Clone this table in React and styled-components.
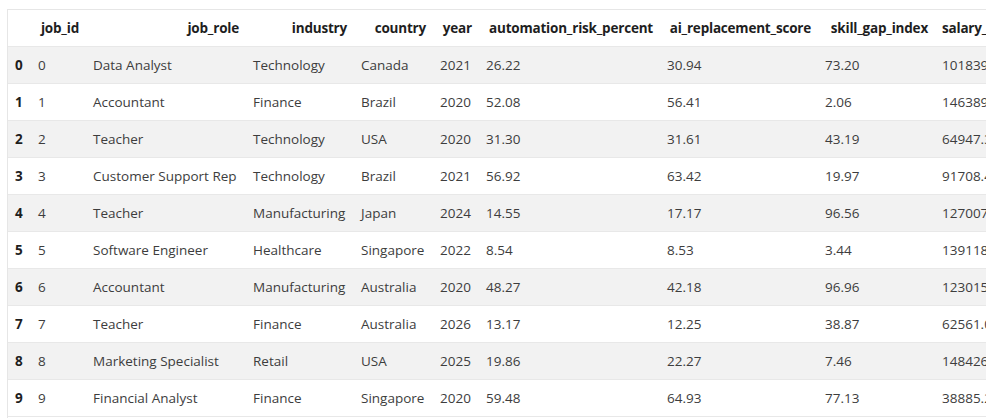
import React from "react";
import styled, { createGlobalStyle } from "styled-components";

const Global = createGlobalStyle`
  html, body { margin: 0; padding: 0; background: #ffffff; }
  body { font-family: "Open Sans", "Noto Sans", "Liberation Sans", sans-serif; }
`;

const Output = styled.div`
  margin: 9px 0 0 7px;
  width: 979px;
  height: 409px;
  overflow: hidden;
  border-top: 1px solid #e6e6e6;
  border-left: 1px solid #e6e6e6;
  box-sizing: border-box;
`;

const Table = styled.table`
  width: max-content;
  border-collapse: collapse;
  border-spacing: 0;
  font-size: 13.5px;
  color: #3d3d3d;
  white-space: nowrap;
`;

const Col = styled.col`
  width: ${(p) => (p.$w ? `${p.$w}px` : "auto")};
`;

const HeadCell = styled.th`
  height: 36px;
  padding: 1px 7px 0;
  box-sizing: border-box;
  text-align: right;
  font-weight: 700;
  letter-spacing: -0.2px;
  color: #1e1e1e;
  border-bottom: 1px solid #e8e8e8;
`;

const Row = styled.tr`
  background: ${(p) => (p.$odd ? "#ffffff" : "#f2f2f2")};
`;

const IndexCell = styled.th`
  height: 37px;
  padding: 1px 0 0 7px;
  box-sizing: border-box;
  text-align: left;
  font-weight: 700;
  color: #1e1e1e;
  border-bottom: 1px solid #e8e8e8;
`;

const Cell = styled.td`
  height: 37px;
  padding: 1px 7px 0;
  box-sizing: border-box;
  text-align: left;
  border-bottom: 1px solid #e8e8e8;
`;

const columns = [
  { key: "idx", label: "", w: 23 },
  { key: "job_id", label: "job_id", w: 55 },
  { key: "job_role", label: "job_role", w: 160 },
  { key: "industry", label: "industry", w: 108 },
  { key: "country", label: "country", w: 79 },
  { key: "year", label: "year", w: 46 },
  { key: "auto", label: "automation_risk_percent", w: 181 },
  { key: "ai", label: "ai_replacement_score", w: 158 },
  { key: "skill", label: "skill_gap_index", w: 117 },
  { key: "salary", label: "salary_before_usd", w: 0 },
];

const rows = [
  ["0", "Data Analyst", "Technology", "Canada", "2021", "26.22", "30.94", "73.20", "101839.59"],
  ["1", "Accountant", "Finance", "Brazil", "2020", "52.08", "56.41", "2.06", "146389.15"],
  ["2", "Teacher", "Technology", "USA", "2020", "31.30", "31.61", "43.19", "64947.31"],
  ["3", "Customer Support Rep", "Technology", "Brazil", "2021", "56.92", "63.42", "19.97", "91708.42"],
  ["4", "Teacher", "Manufacturing", "Japan", "2024", "14.55", "17.17", "96.56", "127007.88"],
  ["5", "Software Engineer", "Healthcare", "Singapore", "2022", "8.54", "8.53", "3.44", "139118.30"],
  ["6", "Accountant", "Manufacturing", "Australia", "2020", "48.27", "42.18", "96.96", "123015.77"],
  ["7", "Teacher", "Finance", "Australia", "2026", "13.17", "12.25", "38.87", "62561.04"],
  ["8", "Marketing Specialist", "Retail", "USA", "2025", "19.86", "22.27", "7.46", "148426.61"],
  ["9", "Financial Analyst", "Finance", "Singapore", "2020", "59.48", "64.93", "77.13", "38885.20"],
];

export default function App() {
  return (
    <>
      <Global />
      <Output>
        <Table>
          <colgroup>
            {columns.map((c) => (
              <Col key={c.key} $w={c.w} />
            ))}
          </colgroup>
          <thead>
            <tr>
              {columns.map((c) => (
                <HeadCell key={c.key}>{c.label}</HeadCell>
              ))}
            </tr>
          </thead>
          <tbody>
            {rows.map((r, i) => (
              <Row key={i} $odd={i % 2 === 1}>
                <IndexCell>{i}</IndexCell>
                {r.map((v, j) => (
                  <Cell key={j}>{v}</Cell>
                ))}
              </Row>
            ))}
          </tbody>
        </Table>
      </Output>
    </>
  );
}
